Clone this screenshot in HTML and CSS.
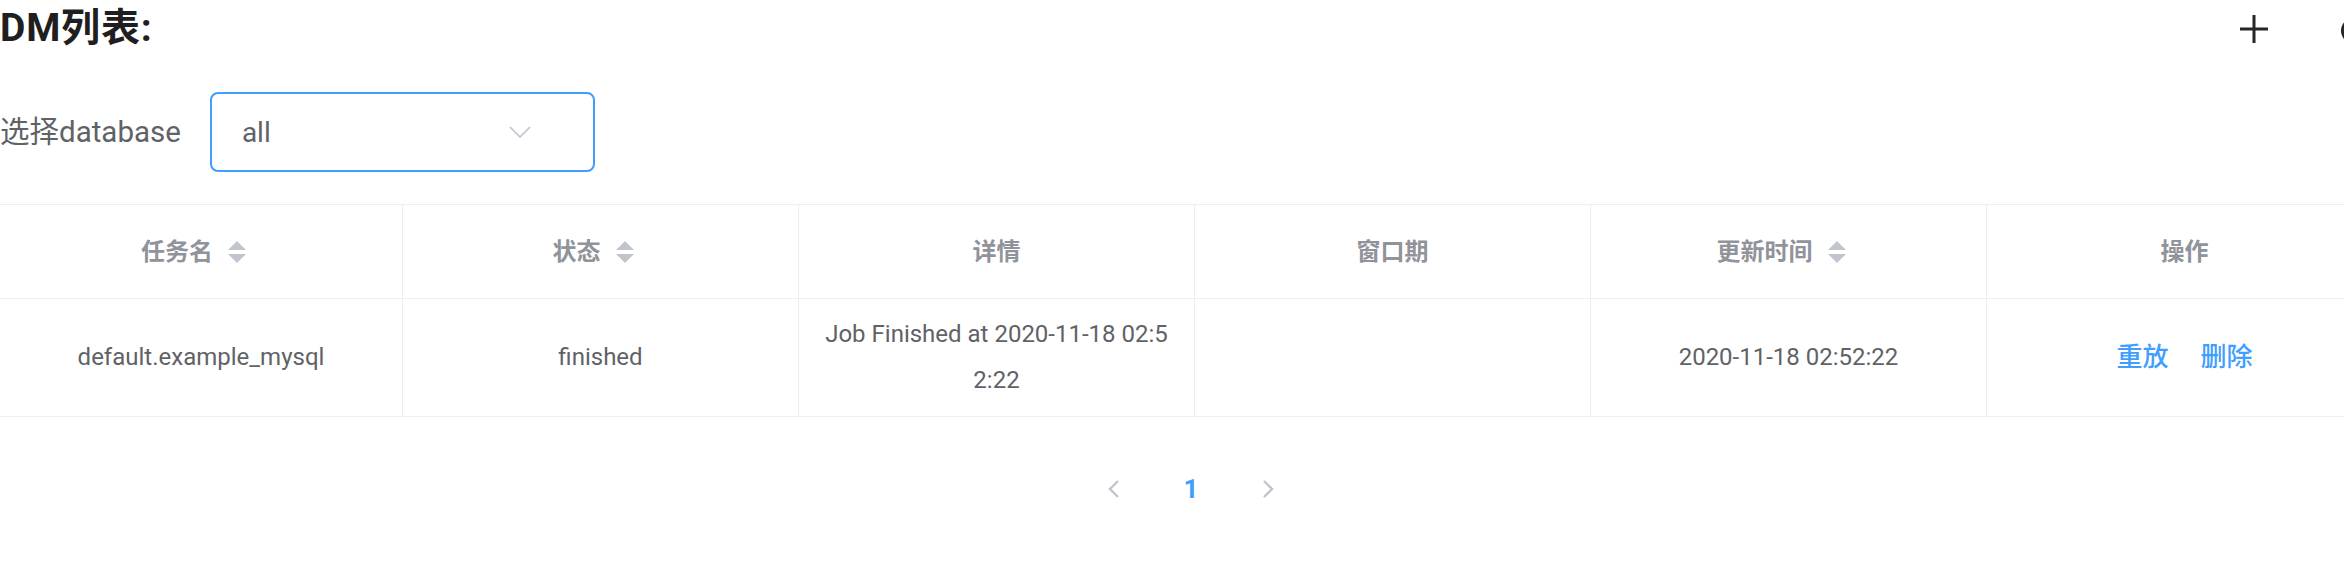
FILE: index.html
```html
<!DOCTYPE html>
<html lang="zh-CN">
<head>
<meta charset="utf-8">
<title>DM列表</title>
<link rel="stylesheet" href="styles.css">
</head>
<body>
<div class="page">
  <header class="topbar">
    <h2 class="title">DM列表:</h2>
    <div class="tools">
      <svg class="icon" width="28" height="28" viewBox="0 0 28 28"><path d="M14 0V28M0 14H28" stroke="#262626" stroke-width="3" fill="none"/></svg>
      <svg class="icon" width="28" height="28" viewBox="0 0 28 28"><path d="M22.5 8A11.5 11.5 0 1 0 25.5 16" stroke="#262626" stroke-width="3" fill="none"/><path d="M18 7.5H24V1.5" stroke="#262626" stroke-width="3" fill="none"/></svg>
    </div>
  </header>

  <div class="form-row">
    <label class="form-label">选择database</label>
    <div class="select">
      <span class="select-value">all</span>
      <svg class="select-arrow" width="22" height="12" viewBox="0 0 22 12"><path d="M1 1L11 11L21 1" stroke="#c0c4cc" stroke-width="1.6" fill="none"/></svg>
    </div>
  </div>

  <div class="table">
    <div class="th"><span>任务名</span><svg class="caret" width="20" height="24" viewBox="0 0 20 24"><path d="M1 10L10 1L19 10Z" fill="#c0c4cc"/><path d="M1 14L19 14L10 23Z" fill="#c0c4cc"/></svg></div>
    <div class="th"><span>状态</span><svg class="caret" width="20" height="24" viewBox="0 0 20 24"><path d="M1 10L10 1L19 10Z" fill="#c0c4cc"/><path d="M1 14L19 14L10 23Z" fill="#c0c4cc"/></svg></div>
    <div class="th"><span>详情</span></div>
    <div class="th"><span>窗口期</span></div>
    <div class="th"><span>更新时间</span><svg class="caret" width="20" height="24" viewBox="0 0 20 24"><path d="M1 10L10 1L19 10Z" fill="#c0c4cc"/><path d="M1 14L19 14L10 23Z" fill="#c0c4cc"/></svg></div>
    <div class="th"><span>操作</span></div>

    <div class="td"><span>default.example_mysql</span></div>
    <div class="td"><span>finished</span></div>
    <div class="td"><span class="wrap">Job Finished at 2020-11-18 02:52:22</span></div>
    <div class="td"></div>
    <div class="td"><span>2020-11-18 02:52:22</span></div>
    <div class="td actions"><a class="link">重放</a><a class="link">删除</a></div>
  </div>

  <nav class="pager">
    <span class="pg-btn"><svg width="12" height="20" viewBox="0 0 12 20"><path d="M10 2L2 10L10 18" stroke="#c0c4cc" stroke-width="2.4" fill="none"/></svg></span>
    <span class="pg-btn pg-num">1</span>
    <span class="pg-btn"><svg width="12" height="20" viewBox="0 0 12 20"><path d="M2 2L10 10L2 18" stroke="#c0c4cc" stroke-width="2.4" fill="none"/></svg></span>
  </nav>
</div>
</body>
</html>
```

FILE: styles.css
```css
html, body {
  margin: 0;
  padding: 0;
  background: #ffffff;
  overflow: hidden;
}

body {
  font-family: Roboto, "Noto Sans CJK SC", sans-serif;
  color: #606266;
}

.page {
  width: 2382px;
}

.topbar {
  display: flex;
  align-items: center;
  justify-content: space-between;
  height: 57px;
  padding-right: 14px;
}

.title {
  margin: 0;
  font-size: 39px;
  font-weight: 700;
  line-height: 57px;
  color: #1f1f1f;
  letter-spacing: 0.8px;
}

.tools {
  display: flex;
  align-items: center;
  gap: 72px;
}

.icon {
  display: block;
}

.form-row {
  display: flex;
  align-items: center;
  margin-top: 35px;
}

.form-label {
  font-size: 29.5px;
  color: #606266;
  margin-right: 29px;
  line-height: 80px;
}

.select {
  box-sizing: border-box;
  width: 385px;
  height: 80px;
  border: 2px solid #409eff;
  border-radius: 8px;
  display: flex;
  align-items: center;
  justify-content: space-between;
  padding: 0 62px 0 30px;
}

.select-value {
  font-size: 28px;
  color: #606266;
}

.select-arrow {
  display: block;
}

.table {
  margin-top: 32px;
  display: grid;
  grid-template-columns: 403px repeat(5, 396px);
  border-top: 1px solid #ebeef5;
}

.th, .td {
  box-sizing: border-box;
  border-right: 1px solid #ebeef5;
  border-bottom: 1px solid #ebeef5;
  display: flex;
  align-items: center;
  justify-content: center;
  text-align: center;
  font-size: 24px;
  line-height: 46px;
}

.th {
  padding: 24px 22px 23px;
  color: #909399;
  font-weight: 700;
}

.td {
  padding: 12px 22px 13px;
  color: #606266;
}

.wrap {
  word-break: break-all;
}

.caret {
  display: block;
  margin-left: 14px;
  margin-right: 14px;
}

.actions {
  gap: 32px;
}

.link {
  color: #409eff;
  font-size: 26px;
  font-weight: 500;
  cursor: pointer;
}

.pager {
  display: flex;
  justify-content: center;
  margin-top: 44px;
}

.pg-btn {
  width: 77px;
  height: 56px;
  display: flex;
  align-items: center;
  justify-content: center;
}

.pg-num {
  font-size: 26px;
  font-weight: 700;
  color: #409eff;
}
```
